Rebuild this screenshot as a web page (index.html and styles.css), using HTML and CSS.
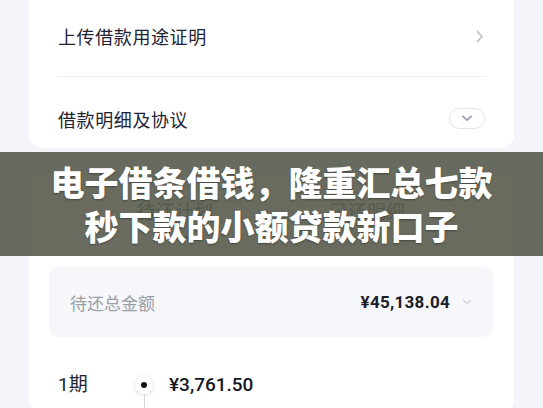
FILE: index.html
```html
<!DOCTYPE html>
<html lang="zh-CN">
<head>
<meta charset="utf-8">
<title>借款详情</title>
<link rel="stylesheet" href="styles.css">
</head>
<body>
<div class="page">
  <section class="card card-top">
    <div class="row row-first">
      <span class="row-label">上传借款用途证明</span>
      <svg class="chev-right" width="8" height="13" viewBox="0 0 8 13"><path d="M1.5 1.5 L6 6.5 L1.5 11.5" fill="none" stroke="#b9bcc7" stroke-width="1.6" stroke-linecap="round" stroke-linejoin="round"/></svg>
    </div>
    <div class="row row-second">
      <span class="row-label">借款明细及协议</span>
      <span class="pill"><svg width="12" height="7" viewBox="0 0 12 7"><path d="M2 1.5 L6 5 L10 1.5" fill="none" stroke="#a3a6bb" stroke-width="2" stroke-linecap="round" stroke-linejoin="round"/></svg></span>
    </div>
  </section>

  <section class="card card-plan">
    <div class="tabs">
      <div class="tab tab-active">待还计划<span class="tab-bar"></span></div>
      <div class="tab">已还明细</div>
    </div>
    <div class="total">
      <span class="total-label">待还总金额</span>
      <span class="total-right">
        <span class="total-amount">¥45,138.04</span>
        <svg width="10" height="6" viewBox="0 0 10 6"><path d="M1.5 1.5 L5 4.5 L8.5 1.5" fill="none" stroke="#cfd1d8" stroke-width="1.4" stroke-linecap="round" stroke-linejoin="round"/></svg>
      </span>
    </div>
    <div class="period">
      <div class="period-name">
        <div class="period-title">1期</div>
        <div class="period-date">08月08日</div>
      </div>
      <div class="period-axis"><span class="dot"></span><span class="axis-line"></span></div>
      <div class="period-body">
        <div class="period-amount">¥3,761.50</div>
        <div class="period-detail"><span>本金¥3,500.00</span><span>利息¥261.50</span></div>
      </div>
    </div>
  </section>

  <div class="banner">
    <p class="banner-line">电子借条借钱，隆重汇总七款</p>
    <p class="banner-line">秒下款的小额贷款新口子</p>
  </div>
</div>
</body>
</html>
```

FILE: styles.css
```css
* { box-sizing: border-box; }
html, body {
  margin: 0;
  padding: 0;
  background: #f3f5fb;
  width: 543px;
  height: 408px;
  overflow: hidden;
  font-family: "Noto Sans CJK SC", "Noto Sans", sans-serif;
  color: #1f2333;
}
.page {
  position: relative;
  padding: 0 29px;
}
.card {
  background: #ffffff;
  border-radius: 14px;
}
.card-top {
  border-radius: 0 0 14px 14px;
  padding: 0 29px;
}
.row {
  display: flex;
  align-items: center;
  justify-content: space-between;
}
.row-first {
  height: 77px;
  padding-bottom: 4px;
  border-bottom: 1px solid #eceef3;
}
.row-second {
  height: 71px;
  padding-top: 12px;
}
.row-label {
  font-size: 18px;
  letter-spacing: 0.6px;
  line-height: 24px;
}
.chev-right { margin-right: 1px; }
.pill {
  width: 36px;
  height: 21px;
  border: 1px solid #e1e2eb;
  border-radius: 11px;
  display: flex;
  align-items: center;
  justify-content: center;
}

.card-plan {
  margin-top: 26px;
  height: 240px;
  padding: 0 21px 0 20px;
}
.tabs {
  display: flex;
  justify-content: center;
  padding-top: 24px;
  height: 93px;
}
.tab {
  position: relative;
  width: 192px;
  text-align: center;
  font-size: 19px;
  line-height: 26px;
  color: #5d6170;
}
.tab-active { color: #1f4a80; }
.tab-bar {
  position: absolute;
  left: 50%;
  top: 38px;
  width: 40px;
  height: 3px;
  margin-left: -20px;
  border-radius: 2px;
  background: #2458a8;
}
.total {
  height: 70px;
  background: #f6f7fa;
  border-radius: 9px;
  display: flex;
  align-items: center;
  justify-content: space-between;
  padding: 0 21px 0 21px;
}
.total-label {
  font-size: 17px;
  color: #9c9ea6;
}
.total-right {
  display: flex;
  align-items: center;
  gap: 12px;
}
.total-amount {
  font-family: Roboto, "Noto Sans", sans-serif;
  font-weight: 700;
  font-size: 17px;
  color: #1b1d26;
  letter-spacing: 0.3px;
}
.period {
  display: flex;
  align-items: flex-start;
  padding-top: 36px;
}
.period-name {
  width: 84px;
  padding-left: 9px;
}
.period-title {
  font-size: 19px;
  line-height: 24px;
  font-family: Roboto, "Noto Sans CJK SC", sans-serif;
}
.period-date {
  margin-top: 8px;
  font-size: 14px;
  color: #9a9ca5;
}
.period-axis {
  width: 22px;
  display: flex;
  flex-direction: column;
  align-items: center;
}
.dot {
  width: 18px;
  height: 18px;
  margin-top: 3px;
  border-radius: 50%;
  background: #fff;
  box-shadow: 0 1px 4px rgba(60, 70, 110, 0.18);
  display: flex;
  align-items: center;
  justify-content: center;
}
.dot::after {
  content: "";
  width: 6px;
  height: 6px;
  border-radius: 50%;
  background: #111;
}
.axis-line {
  width: 1px;
  height: 40px;
  background: #d3d6df;
}
.period-body {
  padding-left: 14px;
}
.period-amount {
  font-family: Roboto, "Noto Sans", sans-serif;
  font-weight: 500;
  font-size: 19px;
  line-height: 24px;
  color: #15171f;
}
.period-detail {
  margin-top: 8px;
  display: flex;
  gap: 20px;
  font-size: 14px;
  color: #9a9ca5;
}

.banner {
  position: absolute;
  left: 0;
  top: 152px;
  width: 543px;
  height: 104px;
  background: rgba(88, 91, 77, 0.9);
  display: flex;
  flex-direction: column;
  justify-content: center;
  align-items: center;
}
.banner-line {
  margin: 0;
  font-size: 34px;
  line-height: 44px;
  font-weight: 900;
  color: #ffffff;
  letter-spacing: 0;
  text-shadow: 0 1px 2px rgba(0, 0, 0, 0.35);
  white-space: nowrap;
}
```
